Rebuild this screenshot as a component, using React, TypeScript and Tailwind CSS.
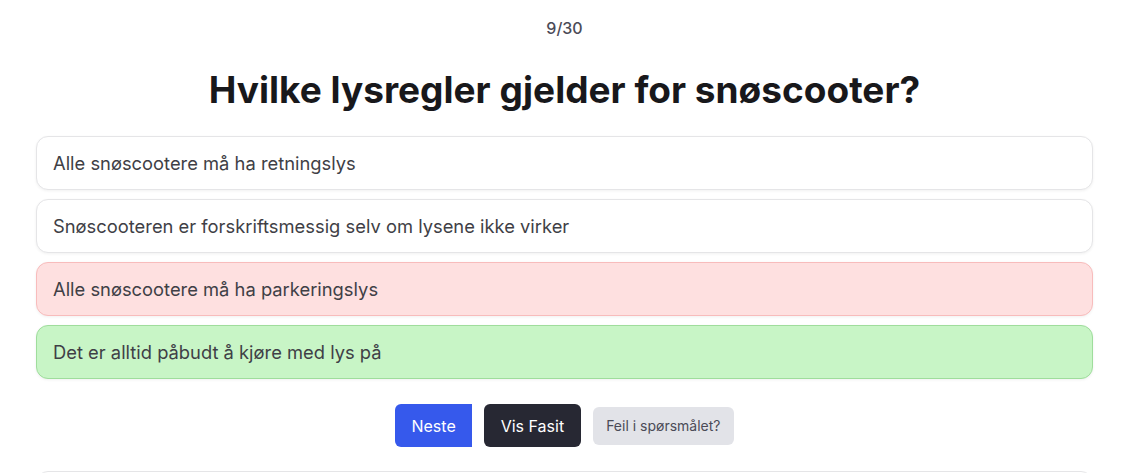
import React from 'react'

type Option = {
  text: string
  state: 'none' | 'wrong' | 'right'
}

const options: Option[] = [
  { text: 'Alle snøscootere må ha retningslys', state: 'none' },
  { text: 'Snøscooteren er forskriftsmessig selv om lysene ikke virker', state: 'none' },
  { text: 'Alle snøscootere må ha parkeringslys', state: 'wrong' },
  { text: 'Det er alltid påbudt å kjøre med lys på', state: 'right' },
]

const stateClasses: Record<Option['state'], string> = {
  none: 'bg-white border-[#e5e5e7]',
  wrong: 'bg-[#fee0e0] border-[#f8bcbc]',
  right: 'bg-[#c8f5c6] border-[#9fdd9c]',
}

export default function App() {
  return (
    <div className="min-h-screen bg-white px-9 pt-4 font-['Inter',sans-serif] overflow-hidden h-[473px]">
      <p className="text-center text-base font-medium leading-6 text-[#4b4b57]">9/30</p>
      <h1 className="mt-[30px] text-center text-[37px] font-bold leading-10 text-[#18181b]">
        Hvilke lysregler gjelder for snøscooter?
      </h1>

      <div className="mt-[26px] flex flex-col gap-[9px]">
        {options.map((o) => (
          <div
            key={o.text}
            className={`rounded-xl border px-4 py-3 text-[18.35px] leading-7 text-[#3f3f46] shadow-[0_1px_3px_rgba(0,0,0,0.06)] ${stateClasses[o.state]}`}
          >
            {o.text}
          </div>
        ))}
      </div>

      <div className="mt-[25px] flex items-center justify-center gap-[12.5px]">
        <button className="h-[43px] rounded-l-md bg-[#3659ec] px-4 text-base text-white">Neste</button>
        <button className="h-[43px] rounded-md bg-[#272833] px-[16.5px] text-base text-white">Vis Fasit</button>
        <button className="h-[38px] rounded-md bg-[#e2e3e8] px-[13px] text-sm text-[#4b4b57]">Feil i spørsmålet?</button>
      </div>

      <div className="mt-6 h-16 rounded-t-xl border border-[#e5e5e7]" />
    </div>
  )
}
